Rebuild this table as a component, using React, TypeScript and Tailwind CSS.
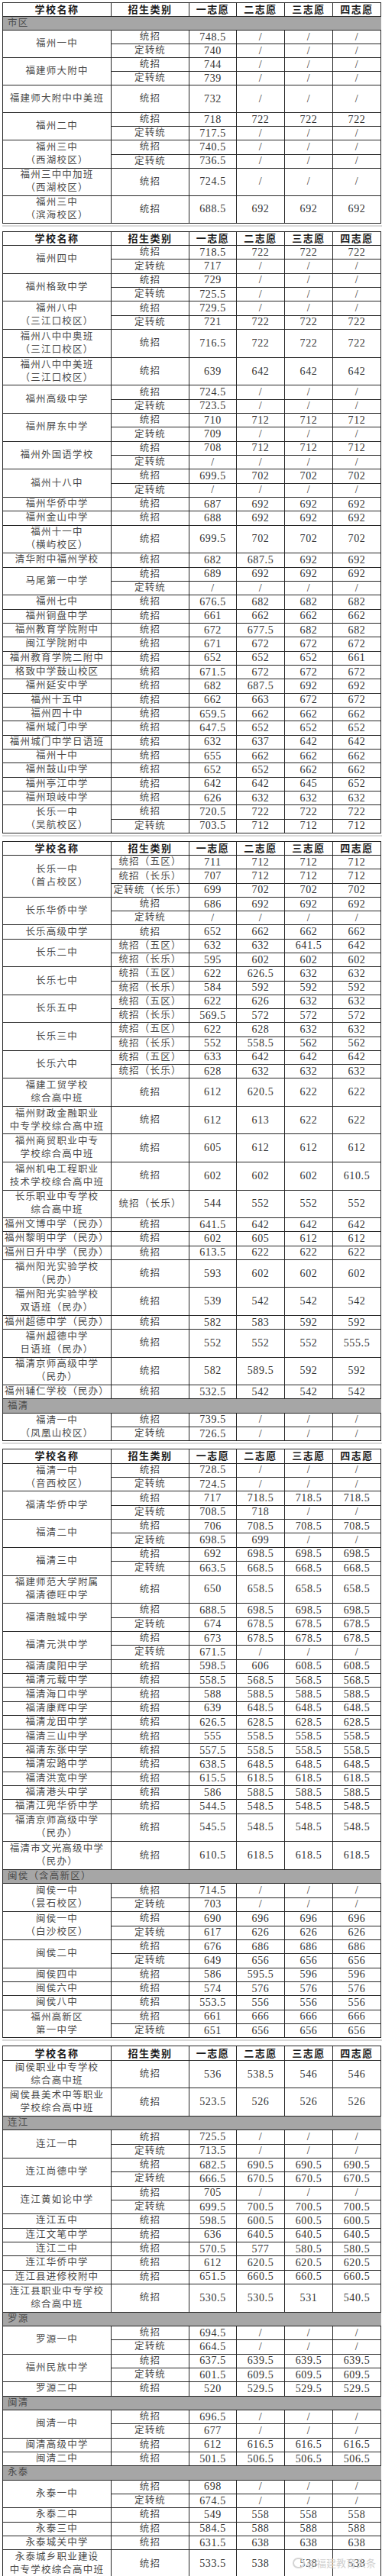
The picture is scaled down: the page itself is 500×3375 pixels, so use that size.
import React from 'react';

type Item = { n: string[]; r: string[] } | { s: string };

const seg1: Item[] = [
  { s: '市区' },
  { n: ['福州一中'], r: ['统招 748.5 / / /', '定转统 740 / / /'] },
  { n: ['福建师大附中'], r: ['统招 744 / / /', '定转统 739 / / /'] },
  { n: ['福建师大附中中美班', ''], r: ['统招 732 / / /'] },
  { n: ['福州二中'], r: ['统招 718 722 722 722', '定转统 717.5 / / /'] },
  { n: ['福州三中', '（西湖校区）'], r: ['统招 740.5 / / /', '定转统 736.5 / / /'] },
  { n: ['福州三中中加班', '（西湖校区）'], r: ['统招 724.5 / / /'] },
  { n: ['福州三中', '（滨海校区）'], r: ['统招 688.5 692 692 692'] },
];

const seg2: Item[] = [
  { n: ['福州四中'], r: ['统招 718.5 722 722 722', '定转统 717 / / /'] },
  { n: ['福州格致中学'], r: ['统招 729 / / /', '定转统 725.5 / / /'] },
  { n: ['福州八中', '（三江口校区）'], r: ['统招 729.5 / / /', '定转统 721 722 722 722'] },
  { n: ['福州八中中奥班', '（三江口校区）'], r: ['统招 716.5 722 722 722'] },
  { n: ['福州八中中美班', '（三江口校区）'], r: ['统招 639 642 642 642'] },
  { n: ['福州高级中学'], r: ['统招 724.5 / / /', '定转统 723.5 / / /'] },
  { n: ['福州屏东中学'], r: ['统招 710 712 712 712', '定转统 709 / / /'] },
  { n: ['福州外国语学校'], r: ['统招 708 712 712 712', '定转统 / / / /'] },
  { n: ['福州十八中'], r: ['统招 699.5 702 702 702', '定转统 / / / /'] },
  { n: ['福州华侨中学'], r: ['统招 687 692 692 692'] },
  { n: ['福州金山中学'], r: ['统招 688 692 692 692'] },
  { n: ['福州十一中', '（横屿校区）'], r: ['统招 699.5 702 702 702'] },
  { n: ['清华附中福州学校'], r: ['统招 682 687.5 692 692'] },
  { n: ['马尾第一中学'], r: ['统招 689 692 692 692', '定转统 / / / /'] },
  { n: ['福州七中'], r: ['统招 676.5 682 682 682'] },
  { n: ['福州铜盘中学'], r: ['统招 661 662 662 662'] },
  { n: ['福州教育学院附中'], r: ['统招 672 677.5 682 682'] },
  { n: ['闽江学院附中'], r: ['统招 671 672 672 672'] },
  { n: ['福州教育学院二附中'], r: ['统招 652 652 652 661'] },
  { n: ['格致中学鼓山校区'], r: ['统招 671.5 672 672 672'] },
  { n: ['福州延安中学'], r: ['统招 682 687.5 692 692'] },
  { n: ['福州十五中'], r: ['统招 662 663 672 672'] },
  { n: ['福州四十中'], r: ['统招 659.5 662 662 662'] },
  { n: ['福州城门中学'], r: ['统招 647.5 652 652 652'] },
  { n: ['福州城门中学日语班'], r: ['统招 632 637 642 642'] },
  { n: ['福州十中'], r: ['统招 655 662 662 662'] },
  { n: ['福州鼓山中学'], r: ['统招 652 652 662 662'] },
  { n: ['福州亭江中学'], r: ['统招 642 642 645 652'] },
  { n: ['福州琅岐中学'], r: ['统招 626 632 632 632'] },
  { n: ['长乐一中', '（吴航校区）'], r: ['统招 720.5 722 722 722', '定转统 703.5 712 712 712'] },
];

const seg3: Item[] = [
  {
    n: ['长乐一中', '（首占校区）'],
    r: ['统招（五区） 711 712 712 712', '统招（长乐） 707 712 712 712', '定转统（长乐） 699 702 702 702'],
  },
  { n: ['长乐华侨中学'], r: ['统招 686 692 692 692', '定转统 / / / /'] },
  { n: ['长乐高级中学'], r: ['统招 652 662 662 662'] },
  { n: ['长乐二中'], r: ['统招（五区） 632 632 641.5 642', '统招（长乐） 595 602 602 602'] },
  { n: ['长乐七中'], r: ['统招（五区） 622 626.5 632 632', '统招（长乐） 584 592 592 592'] },
  { n: ['长乐五中'], r: ['统招（五区） 622 626 632 632', '统招（长乐） 569.5 572 572 572'] },
  { n: ['长乐三中'], r: ['统招（五区） 622 628 632 632', '统招（长乐） 552 558.5 562 562'] },
  { n: ['长乐六中'], r: ['统招（五区） 633 642 642 642', '统招（长乐） 628 632 632 632'] },
  { n: ['福建工贸学校', '综合高中班'], r: ['统招 612 620.5 622 622'] },
  { n: ['福州财政金融职业', '中专学校综合高中班'], r: ['统招 612 613 622 622'] },
  { n: ['福州商贸职业中专', '学校综合高中班'], r: ['统招 605 612 612 612'] },
  { n: ['福州机电工程职业', '技术学校综合高中班'], r: ['统招 602 602 602 610.5'] },
  { n: ['长乐职业中专学校', '综合高中班'], r: ['统招（长乐） 544 552 552 552'] },
  { n: ['福州文博中学（民办）'], r: ['统招 641.5 642 642 642'] },
  { n: ['福州黎明中学（民办）'], r: ['统招 602 605 612 612'] },
  { n: ['福州日升中学（民办）'], r: ['统招 613.5 622 622 622'] },
  { n: ['福州阳光实验学校', '（民办）'], r: ['统招 593 602 602 602'] },
  { n: ['福州阳光实验学校', '双语班（民办）'], r: ['统招 539 542 542 542'] },
  { n: ['福州超德中学（民办）'], r: ['统招 582 583 592 592'] },
  { n: ['福州超德中学', '日语班（民办）'], r: ['统招 552 552 552 555.5'] },
  { n: ['福清京师高级中学', '（民办）'], r: ['统招 582 589.5 592 592'] },
  { n: ['福州辅仁学校（民办）'], r: ['统招 532.5 542 542 542'] },
  { s: '福清' },
  { n: ['福清一中', '（凤凰山校区）'], r: ['统招 739.5 / / /', '定转统 726.5 / / /'] },
];

const seg4: Item[] = [
  { n: ['福清一中', '（音西校区）'], r: ['统招 728.5 / / /', '定转统 724.5 / / /'] },
  { n: ['福清华侨中学'], r: ['统招 717 718.5 718.5 718.5', '定转统 708.5 718 / /'] },
  { n: ['福清二中'], r: ['统招 706 708.5 708.5 708.5', '定转统 698.5 699 / /'] },
  { n: ['福清三中'], r: ['统招 692 698.5 698.5 698.5', '定转统 663.5 668.5 668.5 668.5'] },
  { n: ['福建师范大学附属', '福清德旺中学'], r: ['统招 650 658.5 658.5 658.5'] },
  { n: ['福清融城中学'], r: ['统招 688.5 698.5 698.5 698.5', '定转统 674 678.5 678.5 678.5'] },
  { n: ['福清元洪中学'], r: ['统招 673 678.5 678.5 678.5', '定转统 671.5 / / /'] },
  { n: ['福清虞阳中学'], r: ['统招 598.5 606 608.5 608.5'] },
  { n: ['福清元载中学'], r: ['统招 558.5 568.5 568.5 568.5'] },
  { n: ['福清海口中学'], r: ['统招 588 588.5 588.5 588.5'] },
  { n: ['福清康辉中学'], r: ['统招 639 648.5 648.5 648.5'] },
  { n: ['福清龙田中学'], r: ['统招 626.5 628.5 628.5 628.5'] },
  { n: ['福清三山中学'], r: ['统招 555 558.5 558.5 558.5'] },
  { n: ['福清东张中学'], r: ['统招 557.5 558.5 558.5 558.5'] },
  { n: ['福清宏路中学'], r: ['统招 638.5 648.5 648.5 648.5'] },
  { n: ['福清洪宽中学'], r: ['统招 615.5 618.5 618.5 618.5'] },
  { n: ['福清港头中学'], r: ['统招 586 588.5 588.5 588.5'] },
  { n: ['福清江兜华侨中学'], r: ['统招 544.5 548.5 548.5 548.5'] },
  { n: ['福清京师高级中学', '（民办）'], r: ['统招 545.5 548.5 548.5 548.5'] },
  { n: ['福清市文光高级中学', '（民办）'], r: ['统招 610.5 618.5 618.5 618.5'] },
  { s: '闽侯（含高新区）' },
  { n: ['闽侯一中', '（昙石校区）'], r: ['统招 714.5 / / /', '定转统 703 / / /'] },
  { n: ['闽侯一中', '（白沙校区）'], r: ['统招 690 696 696 696', '定转统 617 626 626 626'] },
  { n: ['闽侯二中'], r: ['统招 676 686 686 686', '定转统 649 656 656 656'] },
  { n: ['闽侯四中'], r: ['统招 586 595.5 596 596'] },
  { n: ['闽侯六中'], r: ['统招 574 576 576 576'] },
  { n: ['闽侯八中'], r: ['统招 553.5 556 556 556'] },
  { n: ['福州高新区', '第一中学'], r: ['统招 661 666 666 666', '定转统 651 656 656 656'] },
];

const seg5: Item[] = [
  { n: ['闽侯职业中专学校', '综合高中班'], r: ['统招 536 538.5 546 546'] },
  { n: ['闽侯县美术中等职业', '学校综合高中班'], r: ['统招 523.5 526 526 526'] },
  { s: '连江' },
  { n: ['连江一中'], r: ['统招 725.5 / / /', '定转统 713.5 / / /'] },
  { n: ['连江尚德中学'], r: ['统招 682.5 690.5 690.5 690.5', '定转统 666.5 670.5 670.5 670.5'] },
  { n: ['连江黄如论中学'], r: ['统招 705 / / /', '定转统 699.5 700.5 700.5 700.5'] },
  { n: ['连江五中'], r: ['统招 598.5 600.5 600.5 600.5'] },
  { n: ['连江文笔中学'], r: ['统招 636 640.5 640.5 640.5'] },
  { n: ['连江二中'], r: ['统招 570.5 577 580.5 580.5'] },
  { n: ['连江华侨中学'], r: ['统招 612 620.5 620.5 620.5'] },
  { n: ['连江县进修校附中'], r: ['统招 651.5 660.5 660.5 660.5'] },
  { n: ['连江县职业中专学校', '综合高中班'], r: ['统招 530.5 530.5 531 540.5'] },
  { s: '罗源' },
  { n: ['罗源一中'], r: ['统招 694.5 / / /', '定转统 664.5 / / /'] },
  { n: ['福州民族中学'], r: ['统招 637.5 639.5 639.5 639.5', '定转统 601.5 609.5 609.5 609.5'] },
  { n: ['罗源二中'], r: ['统招 520 529.5 529.5 529.5'] },
  { s: '闽清' },
  { n: ['闽清一中'], r: ['统招 696.5 / / /', '定转统 677 / / /'] },
  { n: ['闽清高级中学'], r: ['统招 612 616.5 616.5 616.5'] },
  { n: ['闽清二中'], r: ['统招 501.5 506.5 506.5 506.5'] },
  { s: '永泰' },
  { n: ['永泰一中'], r: ['统招 698 / / /', '定转统 674.5 / / /'] },
  { n: ['永泰二中'], r: ['统招 549 558 558 558'] },
  { n: ['永泰三中'], r: ['统招 584.5 588 588 588'] },
  { n: ['永泰城关中学'], r: ['统招 631.5 638 638 638'] },
  { n: ['永泰城乡职业建设', '中专学校综合高中班'], r: ['统招 533.5 538 538 538'] },
];

const cell = 'flex items-center justify-center border-r border-b border-[#262626] whitespace-nowrap';
const cjk = 'text-[12.5px] tracking-[1.2px] leading-[17px] text-[#4a4a4a]';
const num = 'text-[14px] tracking-[0.6px] leading-[14px] text-[#333]';
const spans: Record<number, string> = { 1: '', 2: 'row-span-2', 3: 'row-span-3' };

function Segment({ items, rows }: { items: Item[]; rows: string }) {
  const cells: React.ReactNode[] = [];
  ['学校名称', '招生类别', '一志愿', '二志愿', '三志愿', '四志愿'].forEach((t) => {
    cells.push(
      <div key={`h-${t}`} className={`${cell} text-[13px] font-bold tracking-[1.5px] leading-[15px] text-[#1a1a1a]`}>
        {t}
      </div>
    );
  });
  items.forEach((item, idx) => {
    if ('s' in item) {
      cells.push(
        <div
          key={`s-${idx}`}
          className={`col-span-6 flex items-center border-b border-[#262626] bg-[#a6a6a6] pl-[6px] ${cjk} text-[#2e2e2e]`}
        >
          {item.s}
        </div>
      );
      return;
    }
    const tall = item.r.length === 1 && item.n.length === 2 ? 'row-span-2' : '';
    item.r.forEach((line, i) => {
      const [cat, ...vals] = line.split(' ');
      if (i === 0) {
        cells.push(
          <div key={`n-${idx}`} className={`${cell} ${spans[item.r.length]} ${tall} flex-col ${cjk}`}>
            {item.n.filter((l) => l).map((l) => (
              <span key={l}>{l}</span>
            ))}
          </div>
        );
      }
      cells.push(
        <div key={`c-${idx}-${i}`} className={`${cell} ${tall} ${cjk}`}>
          {cat}
        </div>
      );
      vals.forEach((v, j) => {
        cells.push(
          <div key={`v-${idx}-${i}-${j}`} className={`${cell} ${tall} ${num}`}>
            {v}
          </div>
        );
      });
    });
  });
  return (
    <div className={`grid w-[496px] grid-cols-[142px_102px_62px_63px_63px_63px] border-l border-t border-[#262626] ${rows}`}>
      {cells}
    </div>
  );
}

function Gap() {
  return (
    <div className="flex h-[10px] items-start pt-[2px]">
      <div className="h-[2px] w-[497px] bg-[#d9d9d9]" />
    </div>
  );
}

export default function App() {
  return (
    <div className="relative h-[3375px] w-[500px] overflow-hidden bg-white pl-[3px] pt-[3px] font-['Liberation_Serif','Noto_Sans_CJK_SC',serif]">
      <Segment items={seg1} rows="auto-rows-[18.06px]" />
      <Gap />
      <Segment items={seg2} rows="auto-rows-[18.33px]" />
      <Gap />
      <Segment items={seg3} rows="auto-rows-[18.28px]" />
      <Gap />
      <Segment items={seg4} rows="auto-rows-[18.36px]" />
      <Gap />
      <Segment items={seg5} rows="auto-rows-[18.34px]" />
      <div className="absolute right-[8px] top-[3348px] flex items-center gap-[3px] text-[13px] text-[#cfcfcf]">
        <span className="inline-block h-[14px] w-[16px] rounded-full border-2 border-[#d4d4d4]" />
        <span className="font-['Noto_Sans_CJK_SC',sans-serif]">@福建教育头条</span>
      </div>
    </div>
  );
}
